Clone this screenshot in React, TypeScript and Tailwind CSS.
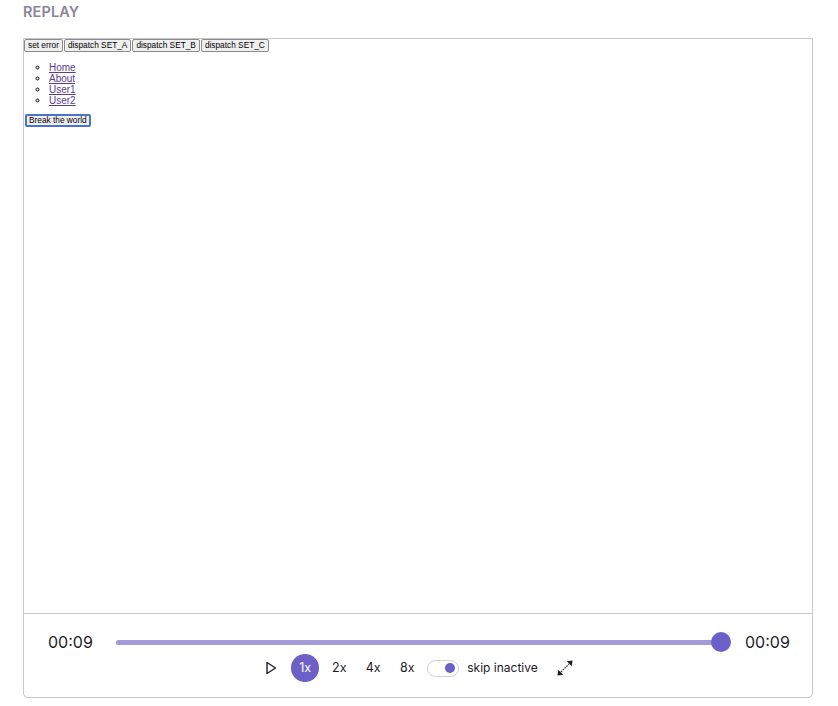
import React from "react";

const speeds = ["1x", "2x", "4x", "8x"];

function PlayIcon() {
  return (
    <svg width="12" height="14" viewBox="0 0 12 14" fill="none">
      <path d="M2 1.5 L10.5 7 L2 12.5 Z" stroke="#1d1a26" strokeWidth="1.4" strokeLinejoin="round" />
    </svg>
  );
}

function FullscreenIcon() {
  return (
    <svg width="18" height="18" viewBox="0 0 18 18" fill="none">
      <line x1="5" y1="13" x2="13" y2="5" stroke="#1d1a26" strokeWidth="1.2" strokeDasharray="1.4 1.2" />
      <path d="M1.5 16.5 L2.2 10.8 L7.2 15.8 Z" fill="#1d1a26" />
      <path d="M16.5 1.5 L15.8 7.2 L10.8 2.2 Z" fill="#1d1a26" />
    </svg>
  );
}

export default function App() {
  return (
    <div className="min-h-[706px] w-[838px] bg-white" style={{ fontFamily: "Inter, 'Noto Sans', sans-serif" }}>
      <div className="px-[23px] pt-[3px]">
        <h2 className="h-[35px] text-[14.5px] font-semibold leading-[17px] tracking-[0.1px] text-[#8a8599]">REPLAY</h2>

        <div className="w-[790px] overflow-hidden rounded-b-[5px] border border-[#c9c6cf] bg-white">
          {/* Replayed page */}
          <div
            className="h-[575px] border-b border-[#c9c6cf] text-black"
            style={{ fontFamily: "'Liberation Sans', Arial, sans-serif" }}
          >
            <div className="flex gap-[1px]">
              {["set error", "dispatch SET_A", "dispatch SET_B", "dispatch SET_C"].map((b) => (
                <button
                  key={b}
                  className="h-[13px] rounded-[2px] border border-[#8a8a8a] bg-[#efefef] px-[3px] text-[8.3px] leading-none text-black"
                >
                  {b}
                </button>
              ))}
            </div>
            <ul className="mt-[10px] mb-[8px] list-[circle] pl-[25px] text-[10px] leading-[11px]">
              {["Home", "About", "User1", "User2"].map((l) => (
                <li key={l}>
                  <a className="text-[#5a3d8f] underline">{l}</a>
                </li>
              ))}
            </ul>
            <button className="ml-[1px] block h-[13px] rounded-[2px] border-2 border-[#4a73c9] bg-[#efefef] px-[2px] text-[8.3px] leading-none text-black">
              Break the world
            </button>
          </div>

          {/* Controller */}
          <div className="flex h-[83px] flex-col items-center pt-[18px]">
            <div className="flex h-[20px] w-full items-center pl-[24px] pr-[23px]">
              <span className="w-[44px] text-[16px] leading-none text-[#1d1a26]">00:09</span>
              <div className="relative ml-[24px] flex h-[20px] w-[616px] items-center">
                <div className="mr-[10px] h-[5px] flex-1 rounded-full bg-[#a49ad8]" />
                <div className="absolute right-0 top-0 h-[20px] w-[20px] rounded-full bg-[#6c5fc7]" />
              </div>
              <span className="ml-[14px] w-[44px] text-[16px] leading-none text-[#1d1a26]">00:09</span>
            </div>

            <div className="mt-[2px] flex h-[28px] items-center gap-[6px]">
              <button className="flex h-[28px] w-[28px] items-center justify-center">
                <PlayIcon />
              </button>
              {speeds.map((s, i) => (
                <button
                  key={s}
                  className={`flex h-[28px] w-[28px] items-center justify-center rounded-full text-[12.5px] ${
                    i === 0 ? "bg-[#6c5fc7] text-white" : "text-[#1d1a26]"
                  }`}
                >
                  {s}
                </button>
              ))}
              <div className="flex items-center">
                <div className="flex h-[17px] w-[32px] items-center justify-end rounded-full border border-[#d3d0d9] pr-[3px]">
                  <div className="h-[10px] w-[10px] rounded-full bg-[#6c5fc7]" />
                </div>
                <span className="ml-[8px] text-[12px] text-[#1d1a26]">skip inactive</span>
              </div>
              <button className="ml-[7px] flex h-[28px] w-[28px] items-center justify-center">
                <FullscreenIcon />
              </button>
            </div>
          </div>
        </div>
      </div>
    </div>
  );
}
